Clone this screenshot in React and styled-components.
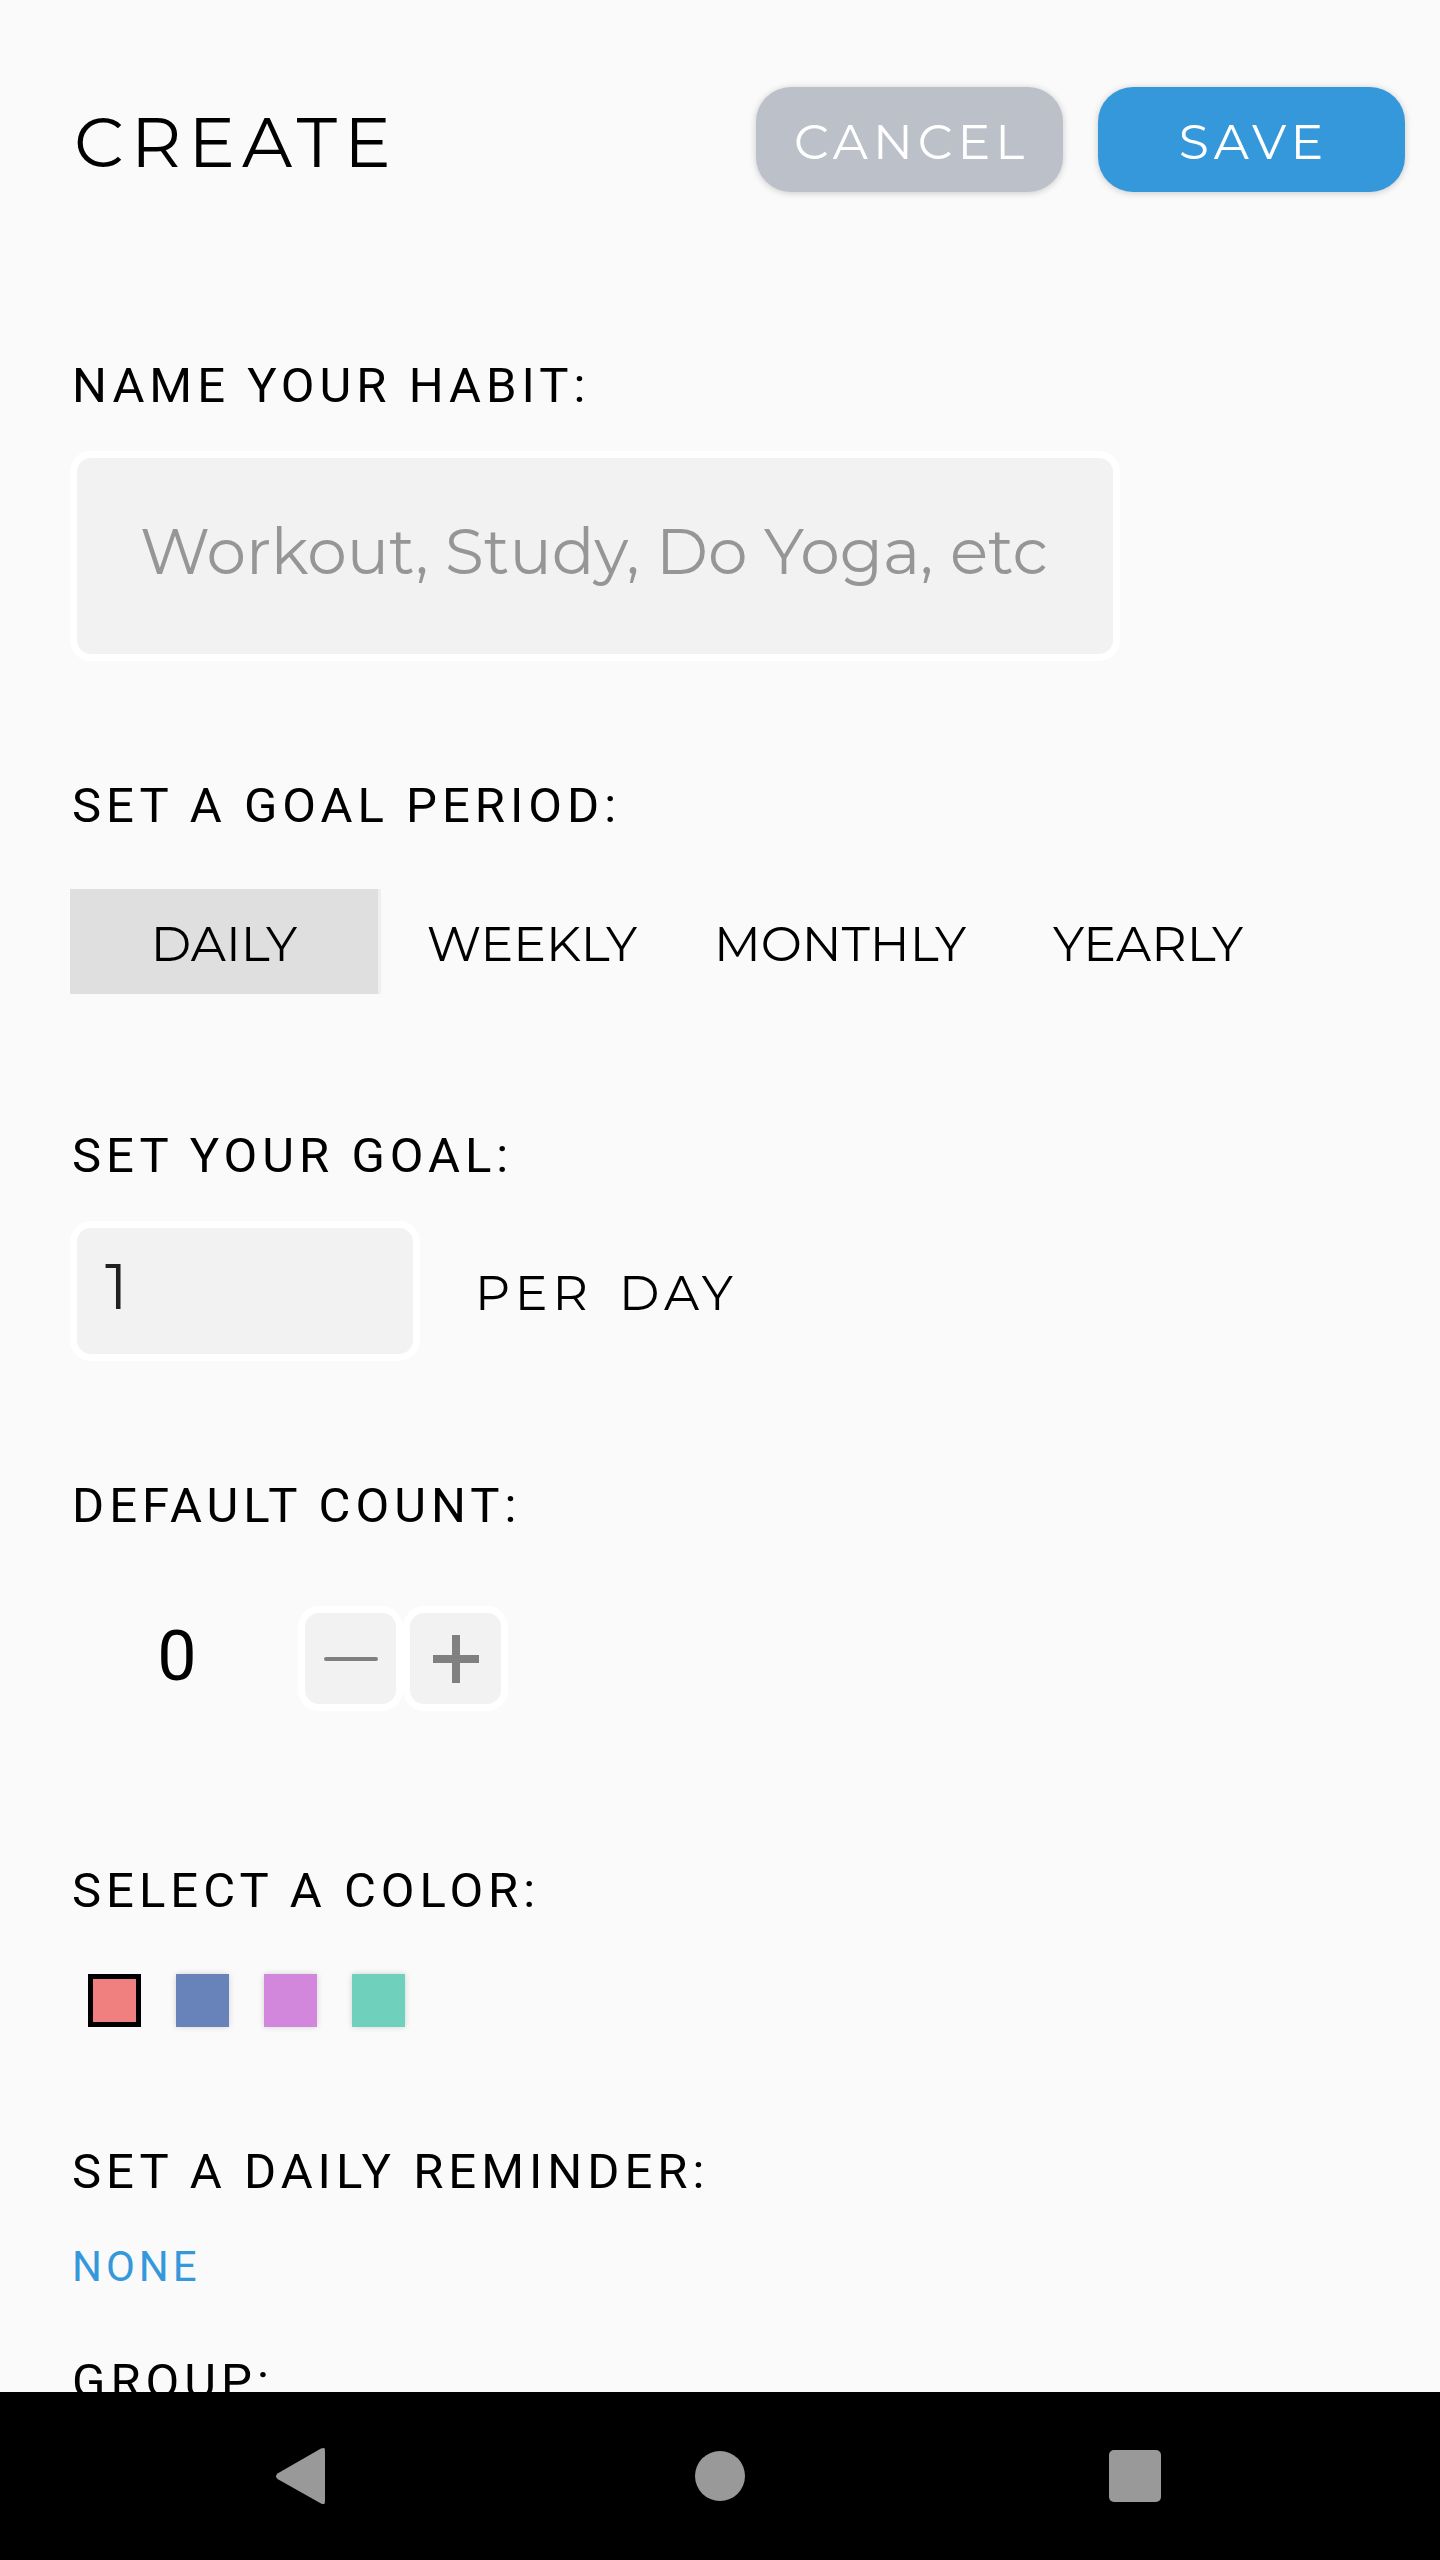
import React, { useState } from "react";
import styled, { createGlobalStyle, css } from "styled-components";

const GlobalStyle = createGlobalStyle`
  *, *::before, *::after { box-sizing: border-box; }
  body { margin: 0; background: #fafafa; }
  button, input { font: inherit; color: inherit; letter-spacing: inherit; }
`;

const display = css`
  font-family: Montserrat, Inter, "Open Sans", sans-serif;
  font-weight: 400;
`;

const Screen = styled.div`
  display: flex;
  flex-direction: column;
  height: 100vh;
  background: #fafafa;
  color: #000;
  font-family: Roboto, "Noto Sans", sans-serif;
`;

const Scroller = styled.main`
  flex: 1;
  min-height: 0;
  overflow-y: auto;
  scrollbar-width: none;
`;

const Header = styled.header`
  display: flex;
  align-items: center;
  justify-content: space-between;
  padding: 87px 35px 0 74px;
`;

const Title = styled.h1`
  ${display}
  margin: 0;
  padding-top: 5px;
  font-size: 70px;
  line-height: 100px;
  letter-spacing: 7px;
`;

const Actions = styled.div`
  display: flex;
  gap: 35px;
`;

const Action = styled.button`
  ${display}
  width: 307px;
  height: 105px;
  padding: 4px 0 0 4px;
  border: 0;
  border-radius: 35px;
  background: ${(p) => p.$color};
  color: #fff;
  font-size: 49px;
  letter-spacing: 5px;
  box-shadow: 0 1px 7px rgba(0, 0, 0, 0.2);
`;

const Form = styled.form`
  display: flex;
  flex-direction: column;
  gap: 114px;
  padding: 163px 70px 70px;
`;

const Section = styled.section`
  display: flex;
  flex-direction: column;
  align-items: flex-start;
  gap: 34px;
`;

const Stack = styled.div`
  display: flex;
  flex-direction: column;
  gap: 54px;
`;

const labelText = css`
  margin: 0;
  padding-left: 2px;
  font-size: 49px;
  font-weight: 400;
  line-height: 62px;
  letter-spacing: 5px;
`;

const Label = styled.label`
  ${labelText}
`;

const Heading = styled.h2`
  ${labelText}
`;

const Field = styled.input`
  ${display}
  width: ${(p) => p.$width}px;
  max-width: 100%;
  height: ${(p) => p.$height}px;
  padding: ${(p) => p.$padding};
  border: 7px solid #fff;
  border-radius: 21px;
  outline: 0;
  background: #f2f2f2;
  color: #212121;
  font-size: 63px;

  &::placeholder {
    color: #969696;
    opacity: 1;
  }
`;

const Row = styled.div`
  display: flex;
  align-items: center;
  gap: 55px;
`;

const Unit = styled.div`
  ${display}
  display: flex;
  gap: 26px;
  padding-top: 4px;
  font-size: 49px;
  line-height: 60px;
  letter-spacing: 5px;
`;

const Periods = styled.div`
  display: flex;
  max-width: 100%;
  padding: 18px 0 17px;
`;

const Period = styled.button`
  ${display}
  width: 308px;
  height: 105px;
  padding: 4px 0 0;
  border: 0;
  background: ${(p) => (p.$active ? "#dfdfdf" : "transparent")};
  box-shadow: ${(p) => (p.$active ? "3px 0 0 #efefef" : "none")};
  font-size: 49px;
`;

const Stepper = styled.div`
  display: flex;
  gap: 14px;
  padding: 35px 0;
`;

const Count = styled.output`
  width: 214px;
  font-size: 70px;
  line-height: 100px;
  text-align: center;
`;

const StepGroup = styled.div`
  display: flex;
`;

const Step = styled.button`
  display: grid;
  place-items: center;
  width: 105px;
  height: 105px;
  padding: 0;
  border: 7px solid #fff;
  border-radius: 21px;
  background: #f2f2f2;
  color: #808080;
`;

const Swatches = styled.div`
  display: flex;
  gap: 35px;
  padding: 18px 18px 0;
`;

const Swatch = styled.button`
  width: 53px;
  height: 53px;
  padding: 0;
  border: ${(p) => (p.$selected ? "5px solid #000" : "0")};
  background: ${(p) => p.$color};
  box-shadow: ${(p) => (p.$selected ? "none" : "0 0 6px rgba(0, 0, 0, 0.16)")};
`;

const Reminder = styled.button`
  padding: 0 0 0 2px;
  border: 0;
  background: none;
  color: #3498db;
  font-size: 42px;
  line-height: 60px;
  letter-spacing: 4px;
`;

const NavBar = styled.nav`
  display: flex;
  flex: none;
  justify-content: center;
  background: #000;
`;

const NavButton = styled.button`
  display: grid;
  flex: 0 1 415px;
  place-items: center;
  height: 168px;
  padding: 0;
  border: 0;
  background: none;
  color: #999;
`;

const PERIODS = [
  { name: "DAILY", unit: "DAY" },
  { name: "WEEKLY", unit: "WEEK" },
  { name: "MONTHLY", unit: "MONTH" },
  { name: "YEARLY", unit: "YEAR" },
];

const COLORS = [
  { name: "Coral", value: "#f08080" },
  { name: "Blue", value: "#6883ba" },
  { name: "Orchid", value: "#d387dc" },
  { name: "Mint", value: "#6fd0bc" },
];

const MinusIcon = () => (
  <svg width="56" height="56" viewBox="0 0 56 56" aria-hidden="true">
    <rect x="1" y="26" width="54" height="4" rx="2" fill="currentColor" />
  </svg>
);

const PlusIcon = () => (
  <svg width="56" height="56" viewBox="0 0 56 56" aria-hidden="true">
    <path d="M24 4h8v20h19v8H32v20h-8V32H5v-8h19z" fill="currentColor" />
  </svg>
);

const BackIcon = () => (
  <svg width="60" height="60" viewBox="0 0 60 60" aria-hidden="true">
    <path
      d="M2.500 27.500 L46 2.500 Q48.500 1.500 49.500 2.300 Q50 3 50 6 L50 54 Q50 57 49.500 57.700 Q48.500 58.500 46 57.500 L2.500 33 Q-0.500 30.300 2.500 27.500 Z"
      fill="currentColor"
    />
  </svg>
);

const HomeIcon = () => (
  <svg width="60" height="60" viewBox="0 0 60 60" aria-hidden="true">
    <circle cx="30" cy="30" r="25" fill="currentColor" />
  </svg>
);

const RecentIcon = () => (
  <svg width="60" height="60" viewBox="0 0 60 60" aria-hidden="true">
    <rect x="4" y="4" width="52" height="52" rx="5" fill="currentColor" />
  </svg>
);

export default function App() {
  const [period, setPeriod] = useState(0);
  const [color, setColor] = useState(0);
  const [count, setCount] = useState(0);

  return (
    <Screen>
      <GlobalStyle />
      <Scroller>
        <Header>
          <Title>CREATE</Title>
          <Actions>
            <Action type="button" $color="#bbc0c9">CANCEL</Action>
            <Action type="submit" form="habit" $color="#3498db">SAVE</Action>
          </Actions>
        </Header>

        <Form id="habit" onSubmit={(e) => e.preventDefault()}>
          <Section>
            <Label htmlFor="name">NAME YOUR HABIT:</Label>
            <Field
              id="name"
              placeholder="Workout, Study, Do Yoga, etc"
              $width={1050}
              $height={210}
              $padding="0 30px 10px 63px"
            />
          </Section>

          <Section>
            <Heading id="period">SET A GOAL PERIOD:</Heading>
            <Periods role="group" aria-labelledby="period">
              {PERIODS.map((p, i) => (
                <Period
                  key={p.name}
                  type="button"
                  aria-pressed={i === period}
                  $active={i === period}
                  onClick={() => setPeriod(i)}
                >
                  {p.name}
                </Period>
              ))}
            </Periods>
          </Section>

          <Section>
            <Label htmlFor="goal">SET YOUR GOAL:</Label>
            <Row>
              <Field
                id="goal"
                defaultValue="1"
                inputMode="numeric"
                $width={350}
                $height={140}
                $padding="0 28px 10px"
              />
              <Unit>
                <span>PER</span> <span>{PERIODS[period].unit}</span>
              </Unit>
            </Row>
          </Section>

          <Section>
            <Heading id="count">DEFAULT COUNT:</Heading>
            <Stepper role="group" aria-labelledby="count">
              <Count>{count}</Count>
              <StepGroup>
                <Step
                  type="button"
                  aria-label="Decrease"
                  onClick={() => setCount(Math.max(0, count - 1))}
                >
                  <MinusIcon />
                </Step>
                <Step
                  type="button"
                  aria-label="Increase"
                  onClick={() => setCount(count + 1)}
                >
                  <PlusIcon />
                </Step>
              </StepGroup>
            </Stepper>
          </Section>

          <Section>
            <Heading id="color">SELECT A COLOR:</Heading>
            <Swatches role="group" aria-labelledby="color">
              {COLORS.map((c, i) => (
                <Swatch
                  key={c.name}
                  type="button"
                  aria-label={c.name}
                  aria-pressed={i === color}
                  $color={c.value}
                  $selected={i === color}
                  onClick={() => setColor(i)}
                />
              ))}
            </Swatches>
          </Section>

          <Stack>
            <Section>
              <Heading>SET A DAILY REMINDER:</Heading>
              <Reminder type="button">NONE</Reminder>
            </Section>
            <Section>
              <Heading>GROUP:</Heading>
            </Section>
          </Stack>
        </Form>
      </Scroller>

      <NavBar>
        <NavButton type="button" aria-label="Back"><BackIcon /></NavButton>
        <NavButton type="button" aria-label="Home"><HomeIcon /></NavButton>
        <NavButton type="button" aria-label="Recent apps"><RecentIcon /></NavButton>
      </NavBar>
    </Screen>
  );
}
